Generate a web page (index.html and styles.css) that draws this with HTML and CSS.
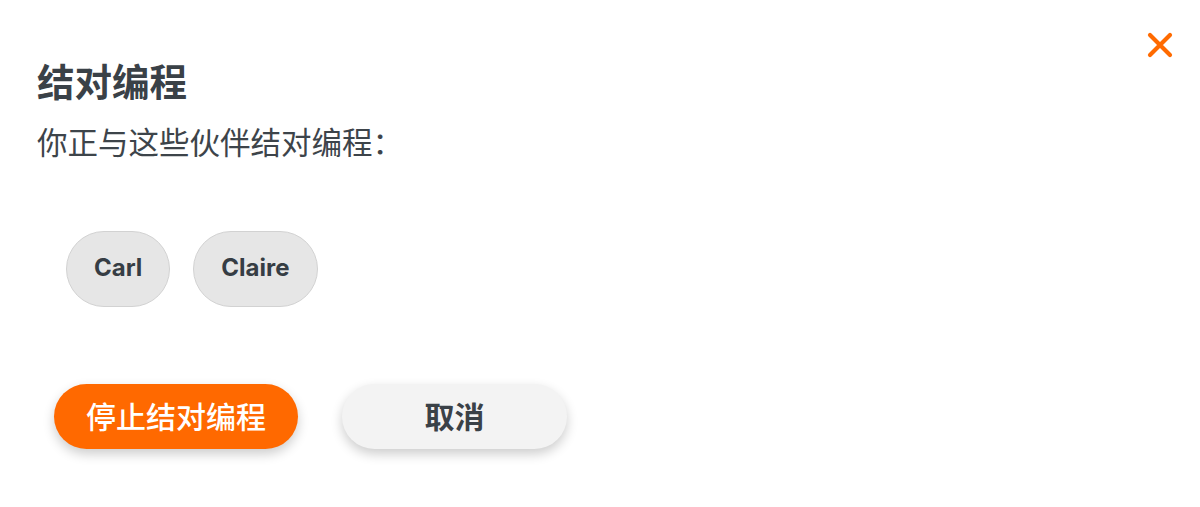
FILE: index.html
```html
<!DOCTYPE html>
<html lang="zh-CN">
<head>
<meta charset="utf-8">
<title>结对编程</title>
<link rel="stylesheet" href="styles.css">
</head>
<body>
<div class="dialog">
  <button class="close" aria-label="关闭">
    <svg width="26" height="26" viewBox="0 0 26 26"><path d="M3 3 L23 23 M23 3 L3 23" stroke="#ff6a00" stroke-width="4.2" stroke-linecap="round" fill="none"/></svg>
  </button>
  <h1 class="title">结对编程</h1>
  <p class="subtitle">你正与这些伙伴结对编程：</p>
  <div class="chips">
    <span class="chip">Carl</span>
    <span class="chip">Claire</span>
  </div>
  <div class="actions">
    <button class="btn btn-primary">停止结对编程</button>
    <button class="btn btn-secondary">取消</button>
  </div>
</div>
</body>
</html>
```
FILE: styles.css
```css
html, body {
  margin: 0;
  padding: 0;
  background: #ffffff;
}
body {
  width: 1200px;
  height: 507px;
  overflow: hidden;
  font-family: "Noto Sans CJK SC", "Noto Sans", sans-serif;
  color: #3a4147;
}
.dialog {
  position: relative;
  display: flex;
  flex-direction: column;
  align-items: flex-start;
  padding: 61px 0 0 37px;
}
.close {
  position: absolute;
  top: 32px;
  right: 27px;
  width: 26px;
  height: 26px;
  padding: 0;
  border: 0;
  background: transparent;
  display: flex;
}
.title {
  margin: 0;
  font-size: 37.5px;
  line-height: 1;
  font-weight: 700;
  color: #3a4147;
}
.subtitle {
  margin: 27px 0 0;
  font-size: 30.5px;
  line-height: 1;
  font-weight: 400;
  color: #3d444a;
}
.chips {
  display: flex;
  gap: 23px;
  margin: 75px 0 0 29px;
}
.chip {
  box-sizing: border-box;
  height: 76px;
  padding: 0 27px 4px;
  display: flex;
  align-items: center;
  border-radius: 38px;
  background: #e6e6e6;
  border: 1.5px solid #d2d2d2;
  font-family: "Inter", "Lato", sans-serif;
  font-weight: 700;
  font-size: 24px;
  color: #363d44;
}
.actions {
  display: flex;
  gap: 44px;
  margin: 77px 0 0 17px;
}
.btn {
  box-sizing: border-box;
  height: 65px;
  padding: 0 0 3px;
  border: 0;
  border-radius: 33px;
  font-family: "Noto Sans CJK SC", sans-serif;
  font-size: 30px;
  line-height: 1;
  display: flex;
  align-items: center;
  justify-content: center;
  box-shadow: 0 5px 12px rgba(0, 0, 0, 0.2);
}
.btn-primary {
  width: 244px;
  background: #ff6900;
  color: #ffffff;
  font-weight: 500;
}
.btn-secondary {
  width: 225px;
  background: #f3f3f3;
  color: #3a4147;
  font-weight: 700;
}
```
